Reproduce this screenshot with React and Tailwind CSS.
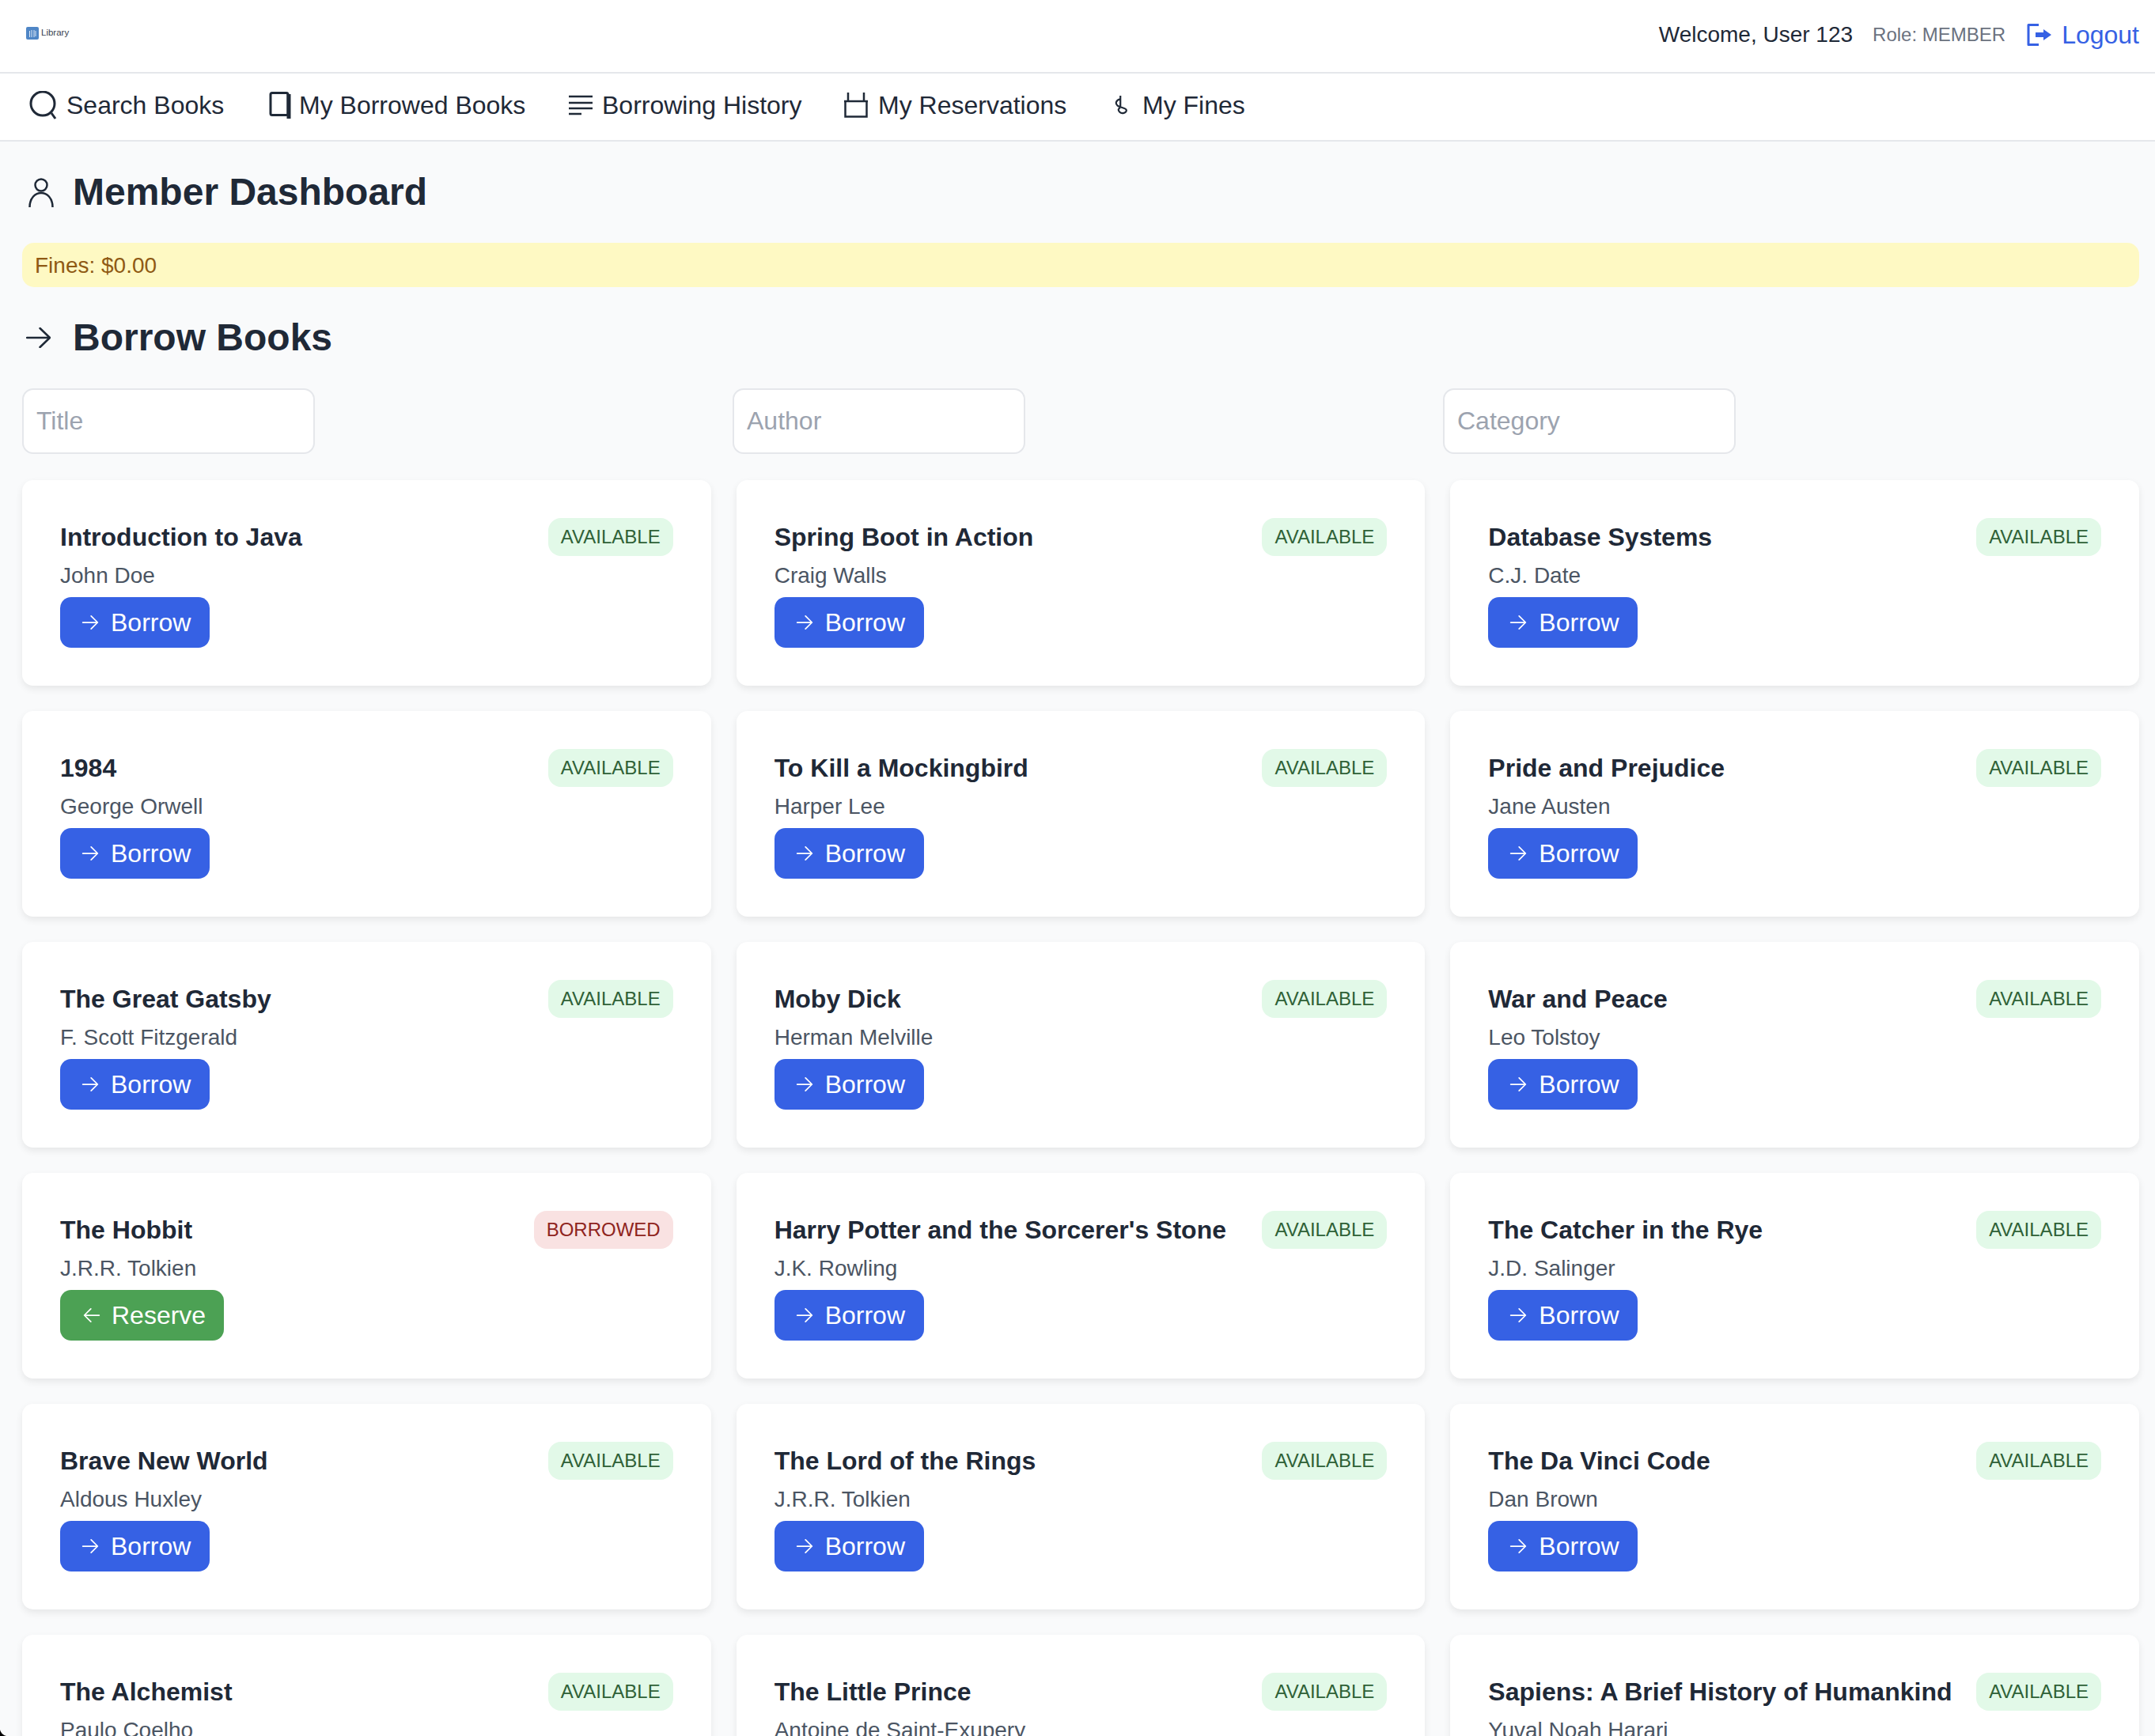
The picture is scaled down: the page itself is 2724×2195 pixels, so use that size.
const BOOKS = [
  ["Introduction to Java", "John Doe"],
  ["Spring Boot in Action", "Craig Walls"],
  ["Database Systems", "C.J. Date"],
  ["1984", "George Orwell"],
  ["To Kill a Mockingbird", "Harper Lee"],
  ["Pride and Prejudice", "Jane Austen"],
  ["The Great Gatsby", "F. Scott Fitzgerald"],
  ["Moby Dick", "Herman Melville"],
  ["War and Peace", "Leo Tolstoy"],
  ["The Hobbit", "J.R.R. Tolkien", true],
  ["Harry Potter and the Sorcerer's Stone", "J.K. Rowling"],
  ["The Catcher in the Rye", "J.D. Salinger"],
  ["Brave New World", "Aldous Huxley"],
  ["The Lord of the Rings", "J.R.R. Tolkien"],
  ["The Da Vinci Code", "Dan Brown"],
  ["The Alchemist", "Paulo Coelho"],
  ["The Little Prince", "Antoine de Saint-Exupery"],
  ["Sapiens: A Brief History of Humankind", "Yuval Noah Harari"],
];

function Arrow({ left, className }) {
  return (
    <svg viewBox="0 0 24 24" fill="none" stroke="currentColor" strokeWidth="1.5" strokeLinecap="round" strokeLinejoin="round" className={className}>
      {left ? <path d="M20 12H4M11 5l-7 7 7 7" /> : <path d="M4 12h16M13 5l7 7-7 7" />}
    </svg>
  );
}

function NavItem({ icon, label, className }) {
  return (
    <div className={`flex items-center ${className}`}>
      {icon}
      <span>{label}</span>
    </div>
  );
}

function Card({ title, author, borrowed }) {
  return (
    <div className="h-[260px] bg-white rounded-[14px] p-[48px] shadow-[0_4px_10px_rgba(0,0,0,0.08)]">
      <div className="flex justify-between items-start">
        <div className="text-[32px] leading-[48px] font-bold text-[#1f2937] mr-[20px]">{title}</div>
        {borrowed ? (
          <span className="h-[48px] px-[16px] flex items-center rounded-[16px] bg-[#f9e2e2] text-[#8f2420] text-[24px]">BORROWED</span>
        ) : (
          <span className="h-[48px] px-[16px] flex items-center rounded-[16px] bg-[#e2f9e8] text-[#2f6137] text-[24px]">AVAILABLE</span>
        )}
      </div>
      <div className="mt-[5px] text-[28px] leading-[40px] text-[#4b5563]">{author}</div>
      {borrowed ? (
        <div className="mt-[7px] w-[207px] h-[64px] flex items-center pl-[26px] rounded-[14px] bg-[#4ca154] text-white text-[32px]">
          <Arrow left className="w-[28px] h-[28px] mr-[11px]" />
          Reserve
        </div>
      ) : (
        <div className="mt-[7px] w-[189px] h-[64px] flex items-center pl-[24px] rounded-[14px] bg-[#3661e4] text-white text-[32px]">
          <Arrow className="w-[28px] h-[28px] mr-[12px]" />
          Borrow
        </div>
      )}
    </div>
  );
}

function Field({ label }) {
  return (
    <input
      placeholder={label}
      readOnly
      className="w-[370px] h-[83px] bg-white border-2 border-[#e5e7eb] rounded-[14px] px-[16px] text-[32px] placeholder:text-[#9ca3af] outline-none"
    />
  );
}

export default function App() {
  return (
    <div className="relative w-[2724px] h-[2195px] overflow-hidden bg-[#f9fafb] font-['Liberation_Sans',Arial,sans-serif] text-[#1f2937]">
      <header className="h-[93px] bg-white border-b-2 border-[#e5e7eb] flex items-center justify-between pl-[33px] pr-[20px] pb-[3px]">
        <div className="flex items-center gap-[3px] -mt-[4px]">
          <svg viewBox="0 0 16 16" className="w-[16px] h-[16px]">
            <rect width="16" height="16" rx="2" fill="#4f86c6" />
            <path d="M4.5 5v8M7 4v9M10 4v9M12 5v7" stroke="#dbe7f5" strokeWidth="1" fill="none" />
          </svg>
          <span className="text-[11.5px] text-[#374151]">Library</span>
        </div>
        <div className="flex items-center">
          <span className="text-[28px]">Welcome, User 123</span>
          <span className="ml-[25px] text-[24px] text-[#6b7280]">Role: MEMBER</span>
          <span className="ml-[27px] flex items-center text-[#3661e4] text-[32px]">
            <svg viewBox="0 0 32 28" className="w-[32px] h-[28px] mr-[12px]">
              <path d="M15 1.5H2V26.5H15" fill="none" stroke="currentColor" strokeWidth="3" strokeLinejoin="round" />
              <path d="M11 11h10V7l10 7-10 7v-4H11z" fill="currentColor" />
            </svg>
            Logout
          </span>
        </div>
      </header>
      <nav className="h-[86px] bg-white border-b-2 border-[#e5e7eb] flex items-center pl-[37px] pb-[4px] text-[32px]">
        <NavItem
          label="Search Books"
          className="w-[303px]"
          icon={
            <svg viewBox="0 0 36 36" fill="none" stroke="currentColor" strokeWidth="3" className="w-[36px] h-[36px] mr-[11px]">
              <circle cx="17" cy="16" r="15" />
              <path d="M28 28l5 7" />
            </svg>
          }
        />
        <NavItem
          label="My Borrowed Books"
          className="w-[379px]"
          icon={
            <svg viewBox="0 0 28 34" fill="none" stroke="currentColor" className="w-[28px] h-[34px] mr-[10px]">
              <rect x="2" y="1.5" width="22" height="28" rx="2" strokeWidth="3" />
              <path d="M25 3V34" strokeWidth="5" />
            </svg>
          }
        />
        <NavItem
          label="Borrowing History"
          className="w-[348px]"
          icon={
            <svg viewBox="0 0 30 26" fill="none" stroke="currentColor" strokeWidth="2.5" className="w-[30px] h-[26px] mr-[12px]">
              <path d="M0 2h30M0 10h30M0 17h30M0 24h16" />
            </svg>
          }
        />
        <NavItem
          label="My Reservations"
          className="w-[342px]"
          icon={
            <svg viewBox="0 0 30 32" fill="none" stroke="currentColor" strokeWidth="2.5" className="w-[30px] h-[32px] mr-[13px]">
              <path d="M0 11h30M1.5 11v19.5h27V11M5 0v11M25 0v11" />
            </svg>
          }
        />
        <NavItem
          label="My Fines"
          icon={
            <svg viewBox="0 0 14 22" fill="none" stroke="currentColor" strokeWidth="2" className="w-[16px] h-[24px] mr-[19px]">
              <path d="M6.3 0V14M6.3 4C1 5 0 9 3 11.5S13.5 14 13.3 17 8 21.5 5.5 19 4 15 6 14" />
            </svg>
          }
        />
      </nav>
      <main className="pl-[28px] pr-[20px]">
        <div className="h-[84px] mt-[22px] flex items-center text-[#1f2937]">
          <svg viewBox="0 0 32 37" fill="none" stroke="currentColor" strokeWidth="2.5" className="w-[32px] h-[37px] ml-[8px] mr-[24px]">
            <circle cx="16" cy="9" r="7.5" />
            <path d="M1.5 37C1.5 13 30.5 13 30.5 37" />
          </svg>
          <h1 className="text-[48px] font-bold">Member Dashboard</h1>
        </div>
        <div className="mt-[22px] h-[56px] flex items-center px-[16px] pt-[1px] bg-[#fef9c3] rounded-[15px] text-[#8f5a14] text-[28px]">Fines: $0.00</div>
        <div className="h-[84px] mt-[22px] flex items-center">
          <svg viewBox="0 0 31 26" fill="none" stroke="currentColor" strokeWidth="2.5" strokeLinecap="round" strokeLinejoin="round" className="w-[31px] h-[26px] ml-[5px] mr-[28px]">
            <path d="M1 13H30M17.5 1L30 13 17.5 25" />
          </svg>
          <h2 className="text-[48px] font-bold">Borrow Books</h2>
        </div>
        <div className="mt-[22px] grid grid-cols-3 gap-[18px]">
          <Field label="Title" />
          <Field label="Author" />
          <Field label="Category" />
        </div>
        <div className="mt-[33px] grid grid-cols-3 gap-[32px]">
          {BOOKS.map((b) => (
            <Card key={b[0]} title={b[0]} author={b[1]} borrowed={b[2]} />
          ))}
        </div>
      </main>
      <svg viewBox="0 0 8 8" className="absolute left-0 bottom-0 w-[8px] h-[8px]">
        <path d="M0 0C1 4 4 7 8 8H0z" fill="#000" />
      </svg>
    </div>
  );
}
